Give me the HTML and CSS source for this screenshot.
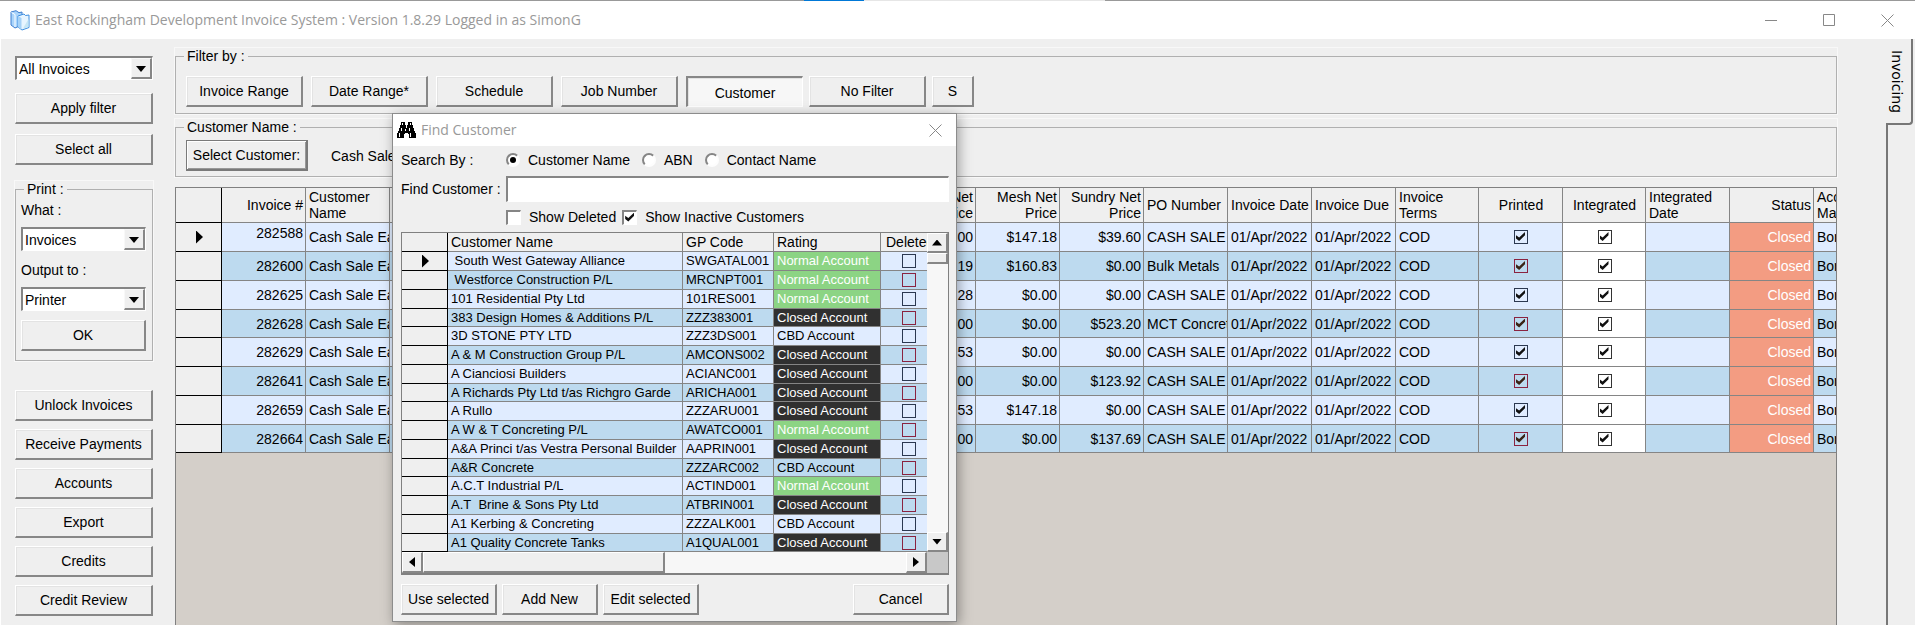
FILE: index.html
```html
<!DOCTYPE html>
<html lang="en">
  <head>
    <meta charset="UTF-8" />
    <meta name="viewport" content="width=device-width, initial-scale=1.0" />
    <title>East Rockingham Development Invoice System</title>
    <link rel="stylesheet" href="styles.css">
  </head>
  <body>
    <div class="edge"><span class="edge-active"></span><span class="edge-light"></span></div>
    <header class="titlebar">
      <svg class="app-icon" width="20" height="21" viewBox="0 0 20 21">
        <path d="M1 2 6 .7l3 2 3-.7v13L5 18 1 15z" fill="#a9d4fb" stroke="#3f7fd0"/>
        <path d="M1.500 2.500 5 4.500V17" fill="none" stroke="#fff"/>
        <path d="M8 6 14 4l1.500 1.500 3.500-.5v12.500L12 20l-4-3z" fill="#e8f5ff" stroke="#3f8fe0"/>
        <path d="M8 6 11.500 8v11.500L8 17z" fill="#a5d2f8"/>
        <path d="M13 18.500 18.500 9v8z" fill="#c6e6f5"/>
      </svg>
      <h1>East Rockingham Development Invoice System : Version 1.8.29 Logged in as SimonG</h1>
      <div class="window-buttons">
        <button aria-label="Minimize"><svg width="13" height="13"><path d="M0 6.500h12" /></svg></button>
        <button aria-label="Maximize"><svg width="13" height="13"><path d="M.5.5h11v11H.5z" /></svg></button>
        <button aria-label="Close"><svg width="13" height="13"><path d="M.5.5l12 12M12.500.5l-12 12" /></svg></button>
      </div>
    </header>

    <div class="workspace">
      <aside class="sidebar">
        <div class="combo">
          <select aria-label="Invoices to show"><option>All Invoices</option></select>
          <span class="drop"></span>
        </div>
        <button class="btn">Apply filter</button>
        <button class="btn">Select all</button>
        <fieldset class="group print">
          <legend>Print :</legend>
          <label for="what">What :</label>
          <div class="combo">
            <select id="what"><option>Invoices</option></select>
            <span class="drop"></span>
          </div>
          <label for="output">Output to :</label>
          <div class="combo">
            <select id="output"><option>Printer</option></select>
            <span class="drop"></span>
          </div>
          <button class="btn">OK</button>
        </fieldset>
        <div class="actions">
          <button class="btn">Unlock Invoices</button>
          <button class="btn">Receive Payments</button>
          <button class="btn">Accounts</button>
          <button class="btn">Export</button>
          <button class="btn">Credits</button>
          <button class="btn">Credit Review</button>
        </div>
      </aside>

      <main class="main">
        <fieldset class="group filter">
          <legend>Filter by :</legend>
          <div class="filter-set">
            <button class="btn">Invoice Range</button>
            <button class="btn">Date Range*</button>
            <button class="btn">Schedule</button>
            <button class="btn">Job Number</button>
          </div>
          <div class="filter-set tight">
            <button class="btn pressed">Customer</button>
            <button class="btn">No Filter</button>
            <button class="btn small">S</button>
          </div>
        </fieldset>
        <fieldset class="group customer">
          <legend>Customer Name :</legend>
          <button class="btn default">Select Customer:</button>
          <span>Cash Sale</span>
        </fieldset>

        <div class="grid-pane">
          <table class="grid invoices">
            <colgroup>
              <col class="w-mark"><col class="w-col"><col class="w-col"><col class="w-net"><col class="w-col"><col class="w-col">
              <col class="w-col"><col class="w-col"><col class="w-col"><col class="w-slim"><col class="w-col"><col class="w-slim">
              <col class="w-col"><col class="w-col"><col class="w-col">
            </colgroup>
            <thead>
              <tr>
                <th class="mark"></th>
                <th class="num">Invoice #</th>
                <th>Customer<br>Name</th>
                <th class="num">Net<br>Price</th>
                <th class="num">Mesh Net<br>Price</th>
                <th class="num">Sundry Net<br>Price</th>
                <th>PO Number</th>
                <th>Invoice Date</th>
                <th>Invoice Due</th>
                <th>Invoice<br>Terms</th>
                <th class="mid">Printed</th>
                <th class="mid">Integrated</th>
                <th>Integrated<br>Date</th>
                <th class="num">Status</th>
                <th>Acc<br>Ma</th>
              </tr>
            </thead>
            <tbody>
              <tr>
                <td class="mark"><span class="pointer"></span></td><td class="num top">282588</td><td>Cash Sale Ea</td><td class="num">00</td><td class="num">$147.18</td><td class="num">$39.60</td><td>CASH SALE</td><td>01/Apr/2022</td><td>01/Apr/2022</td><td>COD</td>
                <td class="mid"><input type="checkbox" aria-label="Printed" checked></td><td class="mid plain"><input type="checkbox" aria-label="Integrated" checked></td><td></td><td class="num closed">Closed</td><td>Bor</td>
              </tr>
              <tr>
                <td class="mark"></td><td class="num">282600</td><td>Cash Sale Ea</td><td class="num">19</td><td class="num">$160.83</td><td class="num">$0.00</td><td>Bulk Metals</td><td>01/Apr/2022</td><td>01/Apr/2022</td><td>COD</td>
                <td class="mid"><input type="checkbox" aria-label="Printed" checked></td><td class="mid plain"><input type="checkbox" aria-label="Integrated" checked></td><td></td><td class="num closed">Closed</td><td>Bor</td>
              </tr>
              <tr>
                <td class="mark"></td><td class="num">282625</td><td>Cash Sale Ea</td><td class="num">28</td><td class="num">$0.00</td><td class="num">$0.00</td><td>CASH SALE</td><td>01/Apr/2022</td><td>01/Apr/2022</td><td>COD</td>
                <td class="mid"><input type="checkbox" aria-label="Printed" checked></td><td class="mid plain"><input type="checkbox" aria-label="Integrated" checked></td><td></td><td class="num closed">Closed</td><td>Bor</td>
              </tr>
              <tr>
                <td class="mark"></td><td class="num">282628</td><td>Cash Sale Ea</td><td class="num">00</td><td class="num">$0.00</td><td class="num">$523.20</td><td>MCT Concret</td><td>01/Apr/2022</td><td>01/Apr/2022</td><td>COD</td>
                <td class="mid"><input type="checkbox" aria-label="Printed" checked></td><td class="mid plain"><input type="checkbox" aria-label="Integrated" checked></td><td></td><td class="num closed">Closed</td><td>Bor</td>
              </tr>
              <tr>
                <td class="mark"></td><td class="num">282629</td><td>Cash Sale Ea</td><td class="num">53</td><td class="num">$0.00</td><td class="num">$0.00</td><td>CASH SALE</td><td>01/Apr/2022</td><td>01/Apr/2022</td><td>COD</td>
                <td class="mid"><input type="checkbox" aria-label="Printed" checked></td><td class="mid plain"><input type="checkbox" aria-label="Integrated" checked></td><td></td><td class="num closed">Closed</td><td>Bor</td>
              </tr>
              <tr>
                <td class="mark"></td><td class="num">282641</td><td>Cash Sale Ea</td><td class="num">00</td><td class="num">$0.00</td><td class="num">$123.92</td><td>CASH SALE</td><td>01/Apr/2022</td><td>01/Apr/2022</td><td>COD</td>
                <td class="mid"><input type="checkbox" aria-label="Printed" checked></td><td class="mid plain"><input type="checkbox" aria-label="Integrated" checked></td><td></td><td class="num closed">Closed</td><td>Bor</td>
              </tr>
              <tr>
                <td class="mark"></td><td class="num">282659</td><td>Cash Sale Ea</td><td class="num">53</td><td class="num">$147.18</td><td class="num">$0.00</td><td>CASH SALE</td><td>01/Apr/2022</td><td>01/Apr/2022</td><td>COD</td>
                <td class="mid"><input type="checkbox" aria-label="Printed" checked></td><td class="mid plain"><input type="checkbox" aria-label="Integrated" checked></td><td></td><td class="num closed">Closed</td><td>Bor</td>
              </tr>
              <tr>
                <td class="mark"></td><td class="num">282664</td><td>Cash Sale Ea</td><td class="num">00</td><td class="num">$0.00</td><td class="num">$137.69</td><td>CASH SALE</td><td>01/Apr/2022</td><td>01/Apr/2022</td><td>COD</td>
                <td class="mid"><input type="checkbox" aria-label="Printed" checked></td><td class="mid plain"><input type="checkbox" aria-label="Integrated" checked></td><td></td><td class="num closed">Closed</td><td>Bor</td>
              </tr>
            </tbody>
          </table>
        </div>
      </main>

      <nav class="tabs">
        <a class="tab" href="#">Invoicing</a>
        <div class="tab-line"></div>
      </nav>
    </div>

    <!-- Find Customer window -->
    <section class="dialog" role="dialog" aria-labelledby="find-title">
      <header class="dialog-title">
        <svg width="19" height="17" viewBox="0 0 19 17">
          <path d="M4 0h4v3h1v3h1V3h1V0h4v3h1v3h1v3h1v2h1v5h-7v-4h-1v-1H8v1H7v4H0v-5h1V9h1V6h1V3h1z" fill="#000"/>
          <path d="M5 1h1v2H5zM13 1h1v2h-1zM4 6h1v3H4zM12 6h1v3h-1zM2 11h1v4H2zM13 11h1v4h-1zM8 7h1v2H8z" fill="#fff"/>
        </svg>
        <h2 id="find-title">Find Customer</h2>
        <button aria-label="Close"><svg width="13" height="13"><path d="M.5.5l12 12M12.500.5l-12 12" /></svg></button>
      </header>
      <div class="dialog-body">
        <div class="search-form">
          <span>Search By :</span>
          <div class="choices">
            <label><input type="radio" name="by" checked> Customer Name</label>
            <label><input type="radio" name="by"> ABN</label>
            <label><input type="radio" name="by"> Contact Name</label>
          </div>
          <label for="find">Find Customer :</label>
          <input class="find" type="text" id="find">
          <span></span>
          <div class="checks">
            <label><input class="sunken" type="checkbox"> Show Deleted</label>
            <label><input class="sunken" type="checkbox" checked> Show Inactive Customers</label>
          </div>
        </div>

        <div class="customer-list">
          <div class="list-view">
            <table class="grid customers">
              <colgroup>
                <col class="w-mark"><col class="w-name"><col class="w-code"><col class="w-rating"><col class="w-deleted">
              </colgroup>
              <thead>
                <tr><th class="mark"></th><th>Customer Name</th><th>GP Code</th><th>Rating</th><th class="deleted">Deleted</th></tr>
              </thead>
              <tbody>
                <tr><td class="mark"><span class="pointer"></span></td><td>&nbsp;South West Gateway Alliance</td><td>SWGATAL001</td><td class="normal">Normal Account</td><td class="deleted"><input type="checkbox" aria-label="Deleted"></td></tr>
                <tr><td class="mark"></td><td>&nbsp;Westforce Construction P/L</td><td>MRCNPT001</td><td class="normal">Normal Account</td><td class="deleted"><input type="checkbox" aria-label="Deleted"></td></tr>
                <tr><td class="mark"></td><td>101 Residential Pty Ltd</td><td>101RES001</td><td class="normal">Normal Account</td><td class="deleted"><input type="checkbox" aria-label="Deleted"></td></tr>
                <tr><td class="mark"></td><td>383 Design Homes &amp; Additions P/L</td><td>ZZZ383001</td><td class="shut">Closed Account</td><td class="deleted"><input type="checkbox" aria-label="Deleted"></td></tr>
                <tr><td class="mark"></td><td>3D STONE PTY LTD</td><td>ZZZ3DS001</td><td>CBD Account</td><td class="deleted"><input type="checkbox" aria-label="Deleted"></td></tr>
                <tr><td class="mark"></td><td>A &amp; M Construction Group P/L</td><td>AMCONS002</td><td class="shut">Closed Account</td><td class="deleted"><input type="checkbox" aria-label="Deleted"></td></tr>
                <tr><td class="mark"></td><td>A Cianciosi Builders</td><td>ACIANC001</td><td class="shut">Closed Account</td><td class="deleted"><input type="checkbox" aria-label="Deleted"></td></tr>
                <tr><td class="mark"></td><td>A Richards Pty Ltd t/as Richgro Garde</td><td>ARICHA001</td><td class="shut">Closed Account</td><td class="deleted"><input type="checkbox" aria-label="Deleted"></td></tr>
                <tr><td class="mark"></td><td>A Rullo</td><td>ZZZARU001</td><td class="shut">Closed Account</td><td class="deleted"><input type="checkbox" aria-label="Deleted"></td></tr>
                <tr><td class="mark"></td><td>A W &amp; T Concreting P/L</td><td>AWATCO001</td><td class="normal">Normal Account</td><td class="deleted"><input type="checkbox" aria-label="Deleted"></td></tr>
                <tr><td class="mark"></td><td>A&amp;A Princi t/as Vestra Personal Builder</td><td>AAPRIN001</td><td class="shut">Closed Account</td><td class="deleted"><input type="checkbox" aria-label="Deleted"></td></tr>
                <tr><td class="mark"></td><td>A&amp;R Concrete</td><td>ZZZARC002</td><td>CBD Account</td><td class="deleted"><input type="checkbox" aria-label="Deleted"></td></tr>
                <tr><td class="mark"></td><td>A.C.T Industrial P/L</td><td>ACTIND001</td><td class="normal">Normal Account</td><td class="deleted"><input type="checkbox" aria-label="Deleted"></td></tr>
                <tr><td class="mark"></td><td>A.T&nbsp; Brine &amp; Sons Pty Ltd</td><td>ATBRIN001</td><td class="shut">Closed Account</td><td class="deleted"><input type="checkbox" aria-label="Deleted"></td></tr>
                <tr><td class="mark"></td><td>A1 Kerbing &amp; Concreting</td><td>ZZZALK001</td><td>CBD Account</td><td class="deleted"><input type="checkbox" aria-label="Deleted"></td></tr>
                <tr><td class="mark"></td><td>A1 Quality Concrete Tanks</td><td>A1QUAL001</td><td class="shut">Closed Account</td><td class="deleted"><input type="checkbox" aria-label="Deleted"></td></tr>
              </tbody>
            </table>
          </div>
          <div class="scroll vertical">
            <button class="arrow up" aria-label="Scroll up"></button>
            <div class="thumb"></div>
            <div class="track"></div>
            <button class="arrow down" aria-label="Scroll down"></button>
          </div>
          <div class="scroll horizontal">
            <button class="arrow left" aria-label="Scroll left"></button>
            <div class="thumb"></div>
            <div class="track"></div>
            <button class="arrow right" aria-label="Scroll right"></button>
          </div>
          <div class="corner"></div>
        </div>

        <footer class="dialog-buttons">
          <button class="btn">Use selected</button>
          <button class="btn">Add New</button>
          <button class="btn">Edit selected</button>
          <button class="btn cancel">Cancel</button>
        </footer>
      </div>
    </section>
  </body>
</html>
```
FILE: styles.css
```css
* {
  box-sizing: border-box;
}
body {
  margin: 0;
  height: 100vh;
  display: flex;
  flex-direction: column;
  overflow: hidden;
  background: #efefef;
  color: #000;
  font-family: "Liberation Sans", Arial, sans-serif;
  font-size: 14px;
  line-height: 16px;
}
button,
input,
select {
  font: inherit;
  color: inherit;
  margin: 0;
}

/* title bar */
.edge {
  display: flex;
  flex: none;
  height: 1px;
  background: #999;
}
.edge-active {
  width: 60px;
  margin-left: 42%;
  background: #0078d7;
}
.edge-light {
  width: 241px;
  background: #e6e6e6;
}
.titlebar {
  display: flex;
  flex: none;
  align-items: center;
  height: 38px;
  padding: 0 8px 0 10px;
  background: #fff;
}
.titlebar h1,
.dialog-title h2 {
  margin: 0 0 0 5px;
  flex: 1;
  color: #999;
  font-family: "Open Sans", "Noto Sans", sans-serif;
  font-size: 14px;
  font-weight: 400;
  line-height: 20px;
}
.window-buttons {
  display: flex;
  gap: 18px;
}
.window-buttons button,
.dialog-title button {
  width: 40px;
  height: 30px;
  padding: 0;
  border: none;
  background: none;
}
.window-buttons svg,
.dialog-title button svg {
  display: block;
  margin: auto;
  fill: none;
  stroke: #888;
}

.workspace {
  display: flex;
  flex: 1;
  min-height: 0;
  border-left: 1px solid #fff;
}

/* controls */
.btn {
  height: 31px;
  padding: 0 4px;
  border: solid;
  border-width: 1px 2px 2px 1px;
  border-color: #fff #878787 #878787 #fff;
  background: #efefef;
  box-shadow: inset 1px 1px #e3e3e3;
  white-space: nowrap;
}
.btn.pressed {
  border-width: 2px 1px 1px 2px;
  border-color: #878787 #fff #fff #878787;
  background: #f7f7f7;
  padding-top: 2px;
}
.btn.default {
  border: 2px solid #7a7a7a;
  border-width: 1px 2px 2px 1px;
  box-shadow: inset 1px 1px #fff, inset -1px -1px #999;
}
.combo {
  position: relative;
  height: 24px;
  border: 2px solid #858585;
  border-right: 1px solid #fff;
  border-bottom: 1px solid #fff;
}
.combo select {
  display: block;
  width: 100%;
  height: 100%;
  padding: 0 22px 0 2px;
  border: none;
  border-radius: 0;
  background: #fff;
  appearance: none;
}
.drop {
  position: absolute;
  top: 0;
  right: 0;
  width: 21px;
  height: 100%;
  border: solid;
  border-width: 1px 2px 2px 1px;
  border-color: #f8f8f8 #878787 #878787 #f8f8f8;
  background: #efefef;
  pointer-events: none;
}
.drop::before,
.arrow::before {
  content: "";
  display: block;
  width: 10px;
  height: 6px;
  background: #000;
  clip-path: polygon(0 0, 100% 0, 50% 100%);
}
.drop::before {
  margin: 7px auto 0 4px;
}
.group {
  margin: 0;
  min-width: 0;
  border: 1px solid #b0b0b0;
  outline: 1px solid #f8f8f8;
}
.group legend {
  padding: 0 3px;
}

/* sidebar */
.sidebar {
  display: flex;
  flex-direction: column;
  flex: none;
  width: 152px;
  padding: 17px 0 0 14px;
}
.sidebar > .btn {
  margin-top: 10px;
}
.sidebar > .combo + .btn {
  margin-top: 13px;
}
.print {
  display: flex;
  flex-direction: column;
  margin-top: 16px;
  padding: 5px 6px 9px 5px;
}
.print legend {
  margin-left: 3px;
}
.print .combo {
  margin: 9px 0 11px;
}
.print label + .combo:last-of-type {
  margin-bottom: 9px;
}
.actions {
  display: flex;
  flex-direction: column;
  gap: 8px;
  margin-top: 29px;
}

/* filters */
.main {
  display: flex;
  flex-direction: column;
  flex: 1;
  min-width: 0;
  margin-left: 22px;
  padding-top: 9px;
}
.main .group {
  display: flex;
  padding: 12px 10px 6px;
}
.main .group legend {
  margin-left: -2px;
}
.filter-set {
  display: flex;
  gap: 8px;
}
.filter-set.tight {
  gap: 6px;
  margin-left: 8px;
}
.filter-set .btn {
  width: 117px;
}
.filter-set .btn.small {
  width: 42px;
}
.main .customer {
  align-items: center;
  gap: 23px;
  margin-top: 5px;
  padding: 5px 10px;
}
.customer .btn {
  width: 122px;
}

/* data grids */
.grid-pane {
  flex: 1;
  min-height: 0;
  margin-top: 10px;
  overflow: hidden;
  border: 1px solid #808080;
  border-bottom: none;
  background: #d4cfc9;
}
.grid {
  table-layout: fixed;
  width: 0;
  border-collapse: separate;
  border-spacing: 0;
}
.grid th,
.grid td {
  padding: 0 2px 0 3px;
  border-right: 1px solid #858585;
  border-bottom: 1px solid #858585;
  overflow: hidden;
  font-weight: 400;
  text-align: left;
  white-space: nowrap;
}
.grid th {
  background: #efefef;
}
.grid tbody tr {
  background: #e0ecff;
}
.grid tbody tr:nth-child(even) {
  background: #bddaef;
}
.grid .mark {
  padding: 0;
  background: #efefef;
  border-color: #000;
}
.grid .num {
  text-align: right;
}
.grid .mid {
  text-align: center;
}
.grid .plain {
  background: #fff;
}
.grid .closed {
  background: #f39c82;
  color: #fff;
}
.grid .normal {
  background: #8cd484;
  color: #fff;
}
.grid .shut {
  background: #303030;
  color: #fff;
}
.w-mark {
  width: 46px;
}
.w-col {
  width: 84px;
}
.w-slim {
  width: 83px;
}
.w-net {
  width: 586px;
}
.w-name {
  width: 235px;
}
.w-code {
  width: 91px;
}
.w-rating {
  width: 107px;
}
.w-deleted {
  width: 60px;
}
.invoices thead tr {
  height: 35px;
}
.invoices tbody tr {
  height: 29px;
}
.invoices tbody tr:nth-child(4n) {
  height: 28px;
}
.invoices .top {
  padding-bottom: 9px;
}
.customers tbody {
  font-size: 13px;
}
.customers tr {
  height: 19px;
}
.customers tr:nth-child(4n) {
  height: 18px;
}
.customers .deleted {
  padding-left: 5px;
}
.customers td.deleted {
  padding-left: 21px;
}
.pointer {
  display: block;
  width: 7px;
  height: 13px;
  margin-left: 20px;
  background: #000;
  clip-path: polygon(0 0, 100% 50%, 0 100%);
}
input[type="checkbox"] {
  display: block;
  flex: none;
  width: 14px;
  height: 14px;
  border: 1px solid #2b3850;
  border-radius: 0;
  background: none;
  appearance: none;
}
.mid input[type="checkbox"] {
  margin: 0 auto;
}
tr:nth-child(even) input[type="checkbox"] {
  border-color: #8a2340;
}
tr .plain input[type="checkbox"],
tr:nth-child(even) .plain input[type="checkbox"] {
  border-color: #333;
}
input[type="checkbox"]:checked::before {
  content: "";
  display: block;
  width: 9px;
  height: 9px;
  margin: 1px;
  background: #111;
  clip-path: polygon(0 35%, 35% 62%, 100% 0, 100% 35%, 35% 100%, 0 72%);
}
tr:nth-child(even) .mid:not(.plain) input:checked::before {
  background: #3a2416;
}

/* side tab */
.tabs {
  display: flex;
  flex-direction: column;
  flex: none;
  width: 78px;
  padding-left: 49px;
}
.tab {
  width: 27px;
  height: 86px;
  padding: 11px 4px 0 0;
  border-right: 2px solid #777;
  border-bottom: 2px solid #777;
  border-bottom-right-radius: 4px;
  color: #000;
  font-family: "DejaVu Sans", sans-serif;
  font-size: 14px;
  line-height: 20px;
  text-decoration: none;
  writing-mode: vertical-rl;
}
.tab-line {
  flex: 1;
  border-left: 2px solid #777;
}

/* find customer */
.dialog {
  position: absolute;
  left: 392px;
  top: 113px;
  width: 565px;
  border: 1px solid #8c8c8c;
  background: #efefef;
  box-shadow: 2px 3px 12px rgba(0, 0, 0, 0.35);
}
.dialog-title {
  display: flex;
  align-items: center;
  height: 32px;
  padding-left: 4px;
  background: #fff;
}
.dialog-title button {
  width: 42px;
}
.dialog-body {
  padding: 5px 7px 6px 8px;
}
.search-form {
  display: grid;
  grid-template-columns: 105px 1fr;
  row-gap: 7px;
  align-items: center;
}
.choices,
.checks {
  display: flex;
  gap: 12px;
}
.checks {
  gap: 6px;
}
.search-form div label {
  display: flex;
  align-items: center;
  gap: 8px;
}
.search-form .choices {
  height: 18px;
}
.find {
  width: 100%;
  height: 26px;
  border: 2px solid #858585;
  border-right: 1px solid #fff;
  border-bottom: 1px solid #fff;
  border-radius: 0;
  background: #fff;
}
input[type="radio"] {
  width: 14px;
  height: 14px;
  border: 2px solid;
  border-color: #858585 #fdfdfd #fdfdfd #858585;
  border-radius: 50%;
  background: #fff;
  appearance: none;
}
input[type="radio"]:checked::before {
  content: "";
  display: block;
  width: 6px;
  height: 6px;
  margin: 2px;
  border-radius: 50%;
  background: #000;
}
input.sunken[type="checkbox"] {
  width: 15px;
  height: 15px;
  border: 2px solid #858585;
  border-right: 1px solid #fff;
  border-bottom: 1px solid #fff;
  background: #fff;
}
.customer-list {
  display: grid;
  grid-template-columns: 1fr 21px;
  grid-template-rows: auto 21px;
  margin-top: 7px;
  border: 1px solid #808080;
  border-bottom-width: 2px;
}
.list-view {
  min-width: 0;
  overflow: hidden;
}
.scroll {
  display: flex;
  background: #f7f7f7;
}
.vertical {
  flex-direction: column;
}
.track {
  flex: 1;
}
.thumb,
.arrow {
  flex: none;
  padding: 0;
  border: solid;
  border-width: 1px 2px 2px 1px;
  border-color: #fff #878787 #878787 #fff;
  background: #efefef;
}
.vertical .arrow {
  height: 20px;
}
.vertical .thumb {
  height: 11px;
}
.horizontal .arrow {
  width: 21px;
}
.horizontal .thumb {
  width: 242px;
}
.arrow::before {
  margin: 0 auto;
}
.arrow.up::before {
  clip-path: polygon(50% 0, 100% 100%, 0 100%);
}
.arrow.left::before,
.arrow.right::before {
  width: 6px;
  height: 10px;
}
.arrow.left::before {
  clip-path: polygon(100% 0, 100% 100%, 0 50%);
}
.arrow.right::before {
  clip-path: polygon(0 0, 100% 50%, 0 100%);
}
.corner {
  background: #c8c8c8;
}
.dialog-buttons {
  display: flex;
  gap: 5px;
  margin-top: 9px;
}
.dialog-buttons .btn {
  width: 96px;
}
.dialog-buttons .cancel {
  margin-left: auto;
}
```
